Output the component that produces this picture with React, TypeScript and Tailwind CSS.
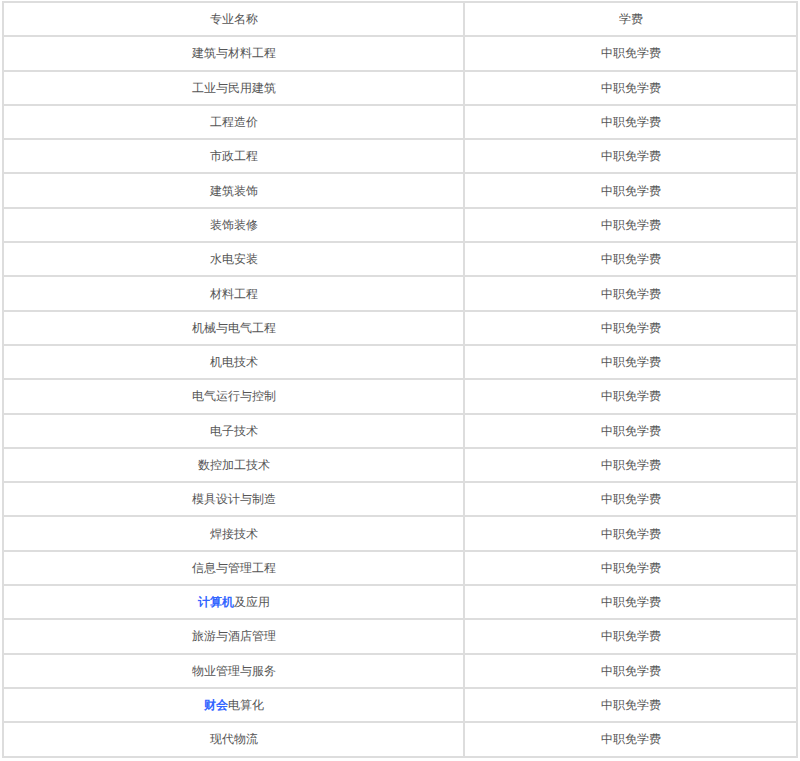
const rows: [string, string?][] = [
  ["建筑与材料工程"],
  ["工业与民用建筑"],
  ["工程造价"],
  ["市政工程"],
  ["建筑装饰"],
  ["装饰装修"],
  ["水电安装"],
  ["材料工程"],
  ["机械与电气工程"],
  ["机电技术"],
  ["电气运行与控制"],
  ["电子技术"],
  ["数控加工技术"],
  ["模具设计与制造"],
  ["焊接技术"],
  ["信息与管理工程"],
  ["及应用", "计算机"],
  ["旅游与酒店管理"],
  ["物业管理与服务"],
  ["电算化", "财会"],
  ["现代物流"],
];

export default function App() {
  return (
    <div className="bg-white w-[800px] h-[761px] pt-[1px] px-[2px] font-['Microsoft_YaHei','Noto_Sans_CJK_SC',sans-serif] text-[12px] text-[#555]">
      <table className="w-[796px] border-collapse table-fixed">
        <colgroup>
          <col className="w-[461px]" />
          <col />
        </colgroup>
        <tbody>
          <tr className="h-[34.3px]">
            <td className="border-2 border-[#ddd] text-center">专业名称</td>
            <td className="border-2 border-[#ddd] text-center">学费</td>
          </tr>
          {rows.map(([name, link], i) => (
            <tr key={i} className="h-[34.3px]">
              <td className="border-2 border-[#ddd] text-center">
                {link && <span className="text-[#3366ff] font-bold">{link}</span>}
                {name}
              </td>
              <td className="border-2 border-[#ddd] text-center">中职免学费</td>
            </tr>
          ))}
        </tbody>
      </table>
    </div>
  );
}
